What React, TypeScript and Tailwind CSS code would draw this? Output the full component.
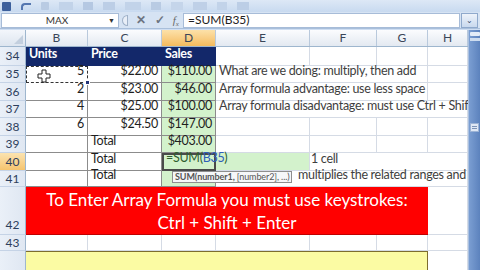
import React from 'react';

const grid = 'border-[#d5dbe5]';
const dark = 'border-[#8c8c8c]';

function Cell({
  w,
  line = grid,
  className = '',
  children,
}: {
  w: string;
  line?: string;
  className?: string;
  children?: React.ReactNode;
}) {
  return (
    <div className={`${w} shrink-0 h-full flex items-end pb-[1px] border-r border-b whitespace-nowrap ${line} ${className}`}>
      {children}
    </div>
  );
}

function RowHead({ n, active = false, end = false }: { n: string; active?: boolean; end?: boolean }) {
  return (
    <div
      className={`w-[26px] shrink-0 h-full flex ${end ? 'items-end' : 'items-center'} justify-center border-r border-b border-r-[#9eb6ce] border-b-[#c5d3e6] text-[12px] tracking-normal text-[#2d3f5c] ${
        active ? 'bg-gradient-to-b from-[#fbe3b0] to-[#f5c46e]' : 'bg-gradient-to-r from-[#eaf0f8] to-[#dfe7f2]'
      }`}
    >
      {n}
    </div>
  );
}

function ColHead({ w, l, active = false }: { w: string; l: string; active?: boolean }) {
  return (
    <div
      className={`${w} shrink-0 h-full flex items-center justify-center border-r border-[#b9c9dc] text-[12px] tracking-normal text-[#3a4658] ${
        active ? 'bg-gradient-to-b from-[#fce1a9] to-[#f5bb5c]' : 'bg-gradient-to-b from-[#fbfcfe] to-[#e3e9f1]'
      }`}
    >
      {l}
    </div>
  );
}

function Cursor() {
  return (
    <svg width="14" height="14" viewBox="0 0 14 14" className="absolute left-[10px] top-[2px]">
      <path d="M5 1h4v4h4v4H9v4H5V9H1V5h4z" fill="white" stroke="#222" strokeWidth="1" />
    </svg>
  );
}

export default function App() {
  const B = 'w-[62px]';
  const C = 'w-[74px]';
  const D = 'w-[54px]';
  const E = 'w-[94px]';
  const F = 'w-[67px]';
  const G = 'w-[51px]';
  const H = 'w-[40px]';
  const EFG = 'w-[212px]';
  const EFGH = 'w-[252px]';
  const FGH = 'w-[158px]';
  const BG = 'w-[402px]';
  const num = 'justify-end pr-[3px] text-[#1e1e1e]';
  const green = 'bg-[#d3f2cc]';

  return (
    <div className="w-[480px] h-[270px] overflow-hidden bg-[#cfdef2] font-['Lato',sans-serif] text-[12.5px] tracking-[-0.3px]">
      {/* quick access toolbar */}
      <div className="h-[12px] flex items-center gap-[10px] px-[2px] bg-gradient-to-b from-[#dde8f6] to-[#c8daf0]">
        <div className="w-[9px] h-[9px] bg-[#3c5f9c] rounded-[1px]" />
        <div className="w-[10px] h-[7px] border-t-2 border-l-2 border-[#5577b0] rounded-tl-[4px]" />
        <div className="w-[8px] h-[8px] bg-[#b9cbe3] rounded-[1px]" />
        <div className="w-[14px] h-[8px] bg-[#c2d3e9]" />
        <div className="w-[10px] h-[8px] bg-[#b5c8e2]" />
        <div className="w-[12px] h-[8px] bg-[#bccee6]" />
        <div className="w-[16px] h-[8px] bg-[#c2d3e9]" />
        <div className="w-[10px] h-[8px] bg-[#b9cbe3]" />
        <div className="w-[12px] h-[8px] bg-[#c5d5ea]" />
        <div className="w-[14px] h-[8px] bg-[#bfd0e7]" />
        <div className="w-[10px] h-[8px] bg-[#c2d3e9]" />
        <div className="w-[12px] h-[8px] bg-[#bccee6]" />
      </div>

      {/* formula bar */}
      <div className="h-[17px] flex items-center bg-[#d6e3f3] border-b border-[#a9bfdb] tracking-normal">
        <div className="w-[118px] h-[15px] bg-white border border-[#a7bcd8] flex items-center relative ml-[1px]">
          <span className="flex-1 text-center text-[10px] text-[#333] pl-[4px]">MAX</span>
          <span className="text-[7px] text-[#333] pr-[3px]">▼</span>
        </div>
        <div className="w-[64px] flex items-center justify-between pl-[3px] pr-[4px] text-[#7a7f88]">
          <span className="w-[6px] h-[11px] border border-[#9fb1c8] rounded-l-full bg-[#e8eef7]" />
          <span className="text-[12px] font-bold text-[#6d7480]">✕</span>
          <span className="text-[12px] font-bold text-[#6d7480]">✓</span>
          <span className="font-['Liberation_Serif',serif] italic text-[11px] text-[#666]">f<sub className="text-[7px]">x</sub></span>
        </div>
        <div className="w-[277px] h-[15px] bg-white border border-[#a7bcd8] flex items-center pl-[4px] text-[12px] text-[#222]">
          =SUM(B35)
        </div>
        <div className="w-[17px] h-[15px] ml-[1px] bg-gradient-to-b from-[#eef3fa] to-[#c9d9ee] border border-[#8fa9cc] flex items-center justify-center text-[8px] leading-none text-[#3b4f6e]">
          ⌄
        </div>
      </div>
      <div className="h-[1px]" />

      <div className="flex">
        {/* sheet */}
        <div className="w-[468px] h-[241px] bg-white overflow-hidden relative">
          {/* column headers */}
          <div className="h-[17px] flex border-b border-[#9eb6ce]">
            <div className="w-[26px] shrink-0 h-full bg-gradient-to-b from-[#f3f6fb] to-[#dde5ef] border-r border-[#9eb6ce] relative">
              <div className="absolute right-[2px] bottom-[2px] w-0 h-0 border-l-[9px] border-l-transparent border-b-[9px] border-b-[#c3cfde]" />
            </div>
            <ColHead w={B} l="B" />
            <ColHead w={C} l="C" />
            <ColHead w={D} l="D" active />
            <ColHead w={E} l="E" />
            <ColHead w={F} l="F" />
            <ColHead w={G} l="G" />
            <ColHead w={H} l="H" />
          </div>

          {/* 34 */}
          <div className="h-[19px] flex">
            <RowHead n="34" />
            <Cell w={B} line="border-[#13286a]" className="bg-[#13286a] text-white font-bold pl-[3px]">Units</Cell>
            <Cell w={C} line="border-[#13286a]" className="bg-[#13286a] text-white font-bold pl-[3px]">Price</Cell>
            <Cell w={D} line="border-[#13286a]" className="bg-[#13286a] text-white font-bold pl-[3px]">Sales</Cell>
            <Cell w={E} />
            <Cell w={F} />
            <Cell w={G} />
            <Cell w={H} />
          </div>

          {/* 35 */}
          <div className="h-[17px] flex">
            <RowHead n="35" />
            <Cell w={B} line="border-[#333] border-dashed border-l border-t" className={`${num} relative`}>
              <Cursor />5
              <div className="absolute right-[-3px] bottom-[-3px] w-[5px] h-[5px] bg-[#23357a] border border-white" />
            </Cell>
            <Cell w={C} line={dark} className={num}>$22.00</Cell>
            <Cell w={D} line={dark} className={`${num} ${green}`}>$110.00</Cell>
            <Cell w={EFG} className="pl-[3px] text-[#3e3e3e]">What are we doing: multiply, then add</Cell>
            <Cell w={H} />
          </div>

          {/* 36 */}
          <div className="h-[18px] flex">
            <RowHead n="36" />
            <Cell w={B} line={dark} className={num}>2</Cell>
            <Cell w={C} line={dark} className={num}>$23.00</Cell>
            <Cell w={D} line={dark} className={`${num} ${green}`}>$46.00</Cell>
            <Cell w={EFG} className="pl-[3px] text-[#3e3e3e]">Array formula advantage: use less space</Cell>
            <Cell w={H} />
          </div>

          {/* 37 */}
          <div className="h-[17px] flex">
            <RowHead n="37" />
            <Cell w={B} line={dark} className={num}>4</Cell>
            <Cell w={C} line={dark} className={num}>$25.00</Cell>
            <Cell w={D} line={dark} className={`${num} ${green}`}>$100.00</Cell>
            <Cell w={EFGH} className="pl-[3px] text-[#3e3e3e]">Array formula disadvantage: must use Ctrl + Shift + Enter</Cell>
          </div>

          {/* 38 */}
          <div className="h-[18px] flex">
            <RowHead n="38" />
            <Cell w={B} line={dark} className={num}>6</Cell>
            <Cell w={C} line={dark} className={num}>$24.50</Cell>
            <Cell w={D} line={dark} className={`${num} ${green}`}>$147.00</Cell>
            <Cell w={E} />
            <Cell w={F} />
            <Cell w={G} />
            <Cell w={H} />
          </div>

          {/* 39 */}
          <div className="h-[17px] flex">
            <RowHead n="39" />
            <Cell w={B} line={dark} />
            <Cell w={C} line={dark} className="pl-[3px] text-[#1e1e1e]">Total</Cell>
            <Cell w={D} line={dark} className={`${num} ${green}`}>$403.00</Cell>
            <Cell w={E} />
            <Cell w={F} />
            <Cell w={G} />
            <Cell w={H} />
          </div>

          {/* 40 */}
          <div className="h-[18px] flex">
            <RowHead n="40" active />
            <Cell w={B} line={dark} />
            <Cell w={C} line={dark} className="pl-[3px] text-[#1e1e1e]">Total</Cell>
            <div className={`${D} shrink-0 h-full flex items-end pb-[1px] pl-[2px] border-2 border-[#4a4a4a] whitespace-nowrap relative z-10 ${green} text-[#2f5e2f]`}>
              =SUM(<span className="text-[#2f5fb8]">B35</span>)
            </div>
            <Cell w={E} className={green} />
            <Cell w={FGH} className="pl-[1px] text-[#3e3e3e]">1 cell</Cell>
          </div>

          {/* 41 */}
          <div className="h-[16px] flex">
            <RowHead n="41" />
            <Cell w={B} line={dark} />
            <Cell w={C} line={dark} className="pl-[3px] text-[#1e1e1e]">Total</Cell>
            <Cell w={D} line={dark} className={green} />
            <Cell w={EFGH} className="pl-[82px] text-[#3e3e3e]">multiplies the related ranges and adds</Cell>
          </div>

          {/* 42 */}
          <div className="h-[48px] flex">
            <RowHead n="42" end />
            <div className={`${BG} shrink-0 h-full bg-[#ff0000] border-b border-[#c00000] flex flex-col items-center justify-end text-white text-[17px] tracking-normal leading-[23px]`}>
              <span>To Enter Array Formula you must use keystrokes:</span>
              <span>Ctrl + Shift + Enter</span>
            </div>
            <Cell w={H} />
          </div>

          {/* 43 */}
          <div className="h-[16px] flex">
            <RowHead n="43" />
            <Cell w={B} />
            <Cell w={C} />
            <Cell w={D} />
            <Cell w={E} />
            <Cell w={F} />
            <Cell w={G} />
            <Cell w={H} />
          </div>

          {/* 44 */}
          <div className="h-[20px] flex">
            <RowHead n="" />
            <div className={`${BG} shrink-0 h-full bg-[#fbfba3] border-t border-r border-[#7d6d2e]`} />
            <Cell w={H} />
          </div>

          {/* function tooltip */}
          <div className="absolute left-[172px] top-[141px] z-20 h-[12px] px-[2px] flex items-center bg-[#f6f7f9] border border-[#8e8e8e] text-[9px] tracking-[-0.1px] text-[#555] whitespace-nowrap">
            <span className="font-bold">SUM(number1,</span>&nbsp;[number2], ...)
          </div>
        </div>

        {/* vertical scrollbar */}
        <div className="w-[12px] h-[241px] bg-gradient-to-r from-[#7b9ed2] to-[#5c82bd] border-l border-[#a9c0e0] flex flex-col items-center">
          <div className="w-[10px] h-[4px] mt-[2px] bg-[#e3ecf8] rounded-[1px]" />
          <div className="w-[10px] h-[3px] mt-[2px] bg-[#cddcef]" />
          <div className="w-[9px] h-[9px] mt-[82px] bg-[#dfe8f5] border border-[#9cb3d6] flex items-center justify-center">
            <div className="w-[5px] h-[3px] border-y border-[#7c93b8]" />
          </div>
        </div>
      </div>
    </div>
  );
}
